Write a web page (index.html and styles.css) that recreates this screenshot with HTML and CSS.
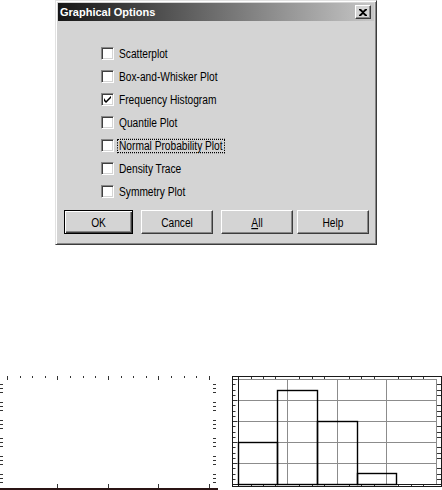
FILE: index.html
```html
<!DOCTYPE html>
<html lang="en">

<head>
  <meta charset="UTF-8">
  <title>Graphical Options</title>
  <link rel="stylesheet" href="styles.css">
</head>

<body>
  <div class="dialog">
    <div class="titlebar">
      <span class="title">Graphical Options</span>
      <span class="close">
        <svg width="8" height="7" viewBox="0 0 8 7">
          <path d="M0 0h2l2 2 2-2h2v1L5 3.5 8 6v1H6L4 5 2 7H0V6l3-2.5L0 1z" fill="#000" />
        </svg>
      </span>
    </div>

    <ul class="options">
      <li class="option"><span class="box"></span><span class="label">Scatterplot</span></li>
      <li class="option"><span class="box"></span><span class="label">Box-and-Whisker Plot</span></li>
      <li class="option">
        <span class="box">
          <svg width="7" height="7" viewBox="0 0 7 7">
            <path d="M0 2v3l2 2 5-5V-0.1L2 5z" fill="#000" />
          </svg>
        </span>
        <span class="label">Frequency Histogram</span>
      </li>
      <li class="option"><span class="box"></span><span class="label">Quantile Plot</span></li>
      <li class="option"><span class="box"></span><span class="label focus">Normal Probability Plot</span></li>
      <li class="option"><span class="box"></span><span class="label">Density Trace</span></li>
      <li class="option"><span class="box"></span><span class="label">Symmetry Plot</span></li>
    </ul>

    <div class="buttons">
      <span class="btn btn-default"><span class="caption">OK</span></span>
      <span class="btn"><span class="caption">Cancel</span></span>
      <span class="btn"><span class="caption"><u>A</u>ll</span></span>
      <span class="btn btn-help"><span class="caption">Help</span></span>
    </div>
  </div>

  <div class="charts">
    <!-- empty plot, only the axis ticks show -->
    <svg class="chart-left" width="218" height="114" viewBox="0 0 218 114">
      <path class="ticks"
        d="M7.5 0v4M57.5 0v4M108.5 0v4M158.5 0v4M209.5 0v4
           M20.5 0v2M32.5 0v2M45.5 0v2M70.5 0v2M83.5 0v2M95.5 0v2M121.5 0v2M133.5 0v2M146.5 0v2M171.5 0v2M184.5 0v2M196.5 0v2
           M0 8.5h3M0 12.5h3M0 16.5h3M0 26.5h3M0 30.5h3M0 34.5h3M0 44.5h3M0 48.5h3M0 52.5h3
           M0 62.5h3M0 66.5h3M0 70.5h3M0 80.5h3M0 84.5h3M0 88.5h3M0 98.5h3M0 102.5h3M0 106.5h3
           M213 8.5h3M213 12.5h3M213 16.5h3M213 26.5h3M213 30.5h3M213 34.5h3M213 44.5h3M213 48.5h3M213 52.5h3
           M213 62.5h3M213 66.5h3M213 70.5h3M213 80.5h3M213 84.5h3M213 88.5h3M213 98.5h3M213 102.5h3M213 106.5h3
           M57.5 108v4M108.5 108v4M158.5 108v4M209.5 108v4" />
      <path class="axis" d="M0 113H218" />
    </svg>

    <!-- frequency histogram -->
    <svg class="chart-right" width="210" height="114" viewBox="0 0 210 114">
      <path class="grid" d="M6 3.5H204M6 24.5H204M6 45.5H204M6 66.5H204M6 87.5H204
           M55.5 3V108M105.5 3V108M154.5 3V108M204.5 3V108" />
      <path class="ticks"
        d="M0.5 3.5h5M0.5 8.5h3M0.5 14.5h3M0.5 19.5h3M0.5 24.5h5M0.5 29.5h3M0.5 35.5h3M0.5 40.5h3
           M0.5 45.5h5M0.5 50.5h3M0.5 56.5h3M0.5 61.5h3M0.5 66.5h5M0.5 71.5h3M0.5 77.5h3M0.5 82.5h3
           M0.5 87.5h5M0.5 92.5h3M0.5 98.5h3M0.5 103.5h3
           M205 8.5h4M205 14.5h4M205 19.5h4M205 29.5h4M205 35.5h4M205 40.5h4M205 50.5h4M205 56.5h4
           M205 61.5h4M205 71.5h4M205 77.5h4M205 82.5h4M205 92.5h4M205 98.5h4M205 103.5h4
           M19.5 1v2M31.5 1v2M43.5 1v2M67.5 1v2M80.5 1v2M92.5 1v2M117.5 1v2M129.5 1v2M142.5 1v2M166.5 1v2M179.5 1v2M191.5 1v2
           M19.5 109v2M31.5 109v2M43.5 109v2M67.5 109v2M80.5 109v2M92.5 109v2M117.5 109v2M129.5 109v2M142.5 109v2M166.5 109v2M179.5 109v2M191.5 109v2" />
      <rect class="frame" x="0.5" y="0.5" width="209" height="110" />
      <path class="plot-edge" d="M6.5 1V111M1 108.5H209" />
      <g class="bars">
        <rect x="6.5" y="66.5" width="39" height="42" />
        <rect x="45.5" y="14.5" width="40" height="94" />
        <rect x="85.5" y="45.5" width="40" height="63" />
        <rect x="125.5" y="97.5" width="39" height="11" />
      </g>
    </svg>
  </div>
</body>

</html>
```

FILE: styles.css
```css
body {
  margin: 0;
  height: 490px;
  overflow: hidden;
  background: #fff;
  color: #000;
  font-family: "Liberation Sans", Arial, sans-serif;
  font-size: 10.2px;
}

.dialog {
  margin-left: 55px;
  width: 322px;
  height: 245px;
  box-sizing: border-box;
  padding: 2px;
  background: #d4d4d4;
  border: 1px solid;
  border-color: #e2e2e2 #3c3c3c #3c3c3c #e2e2e2;
  box-shadow: inset 1px 1px #fff, inset -1px -1px #878787;
}

.titlebar {
  height: 18px;
  display: flex;
  align-items: center;
  justify-content: space-between;
  padding: 0 3px 0 2px;
  background: linear-gradient(to right, #161616, #c6c6c6);
  color: #fff;
}

.title {
  font-weight: bold;
  font-size: 11px;
}

.close {
  width: 16px;
  height: 14px;
  box-sizing: border-box;
  display: flex;
  align-items: center;
  justify-content: center;
  background: #d4d4d4;
  border: 1px solid;
  border-color: #fff #3c3c3c #3c3c3c #fff;
  box-shadow: inset -1px -1px #878787;
}

.options {
  list-style: none;
  margin: 0;
  padding: 21px 0 0 43px;
}

.option {
  display: flex;
  align-items: center;
  gap: 3px;
  height: 23px;
}

.box {
  width: 13px;
  height: 13px;
  box-sizing: border-box;
  display: flex;
  align-items: center;
  justify-content: center;
  background: #fff;
  border: 1px solid;
  border-color: #878787 #fff #fff #878787;
  box-shadow: inset 1px 1px #404040, inset -1px -1px #d4d4d4;
}

/* the dialog font is tall and narrow */
.label,
.caption {
  display: inline-block;
  transform: scaleY(1.22);
}

.label {
  padding: 0 1px;
  border: 1px dotted transparent;
  line-height: 10px;
}

.label.focus {
  border-color: #000;
}

.buttons {
  display: flex;
  gap: 8px;
  margin-top: 7px;
  padding-left: 6px;
}

.btn {
  width: 72px;
  height: 24px;
  box-sizing: border-box;
  display: flex;
  align-items: center;
  justify-content: center;
  background: #d4d4d4;
  border: 1px solid;
  border-color: #fff #3c3c3c #3c3c3c #fff;
  box-shadow: inset -1px -1px #878787;
}

.btn-default {
  width: 69px;
  border-color: #000;
  box-shadow: inset 1px 1px #fff, inset -1px -1px #3c3c3c, inset -2px -2px #878787;
}

.btn-help {
  margin-left: -4px;
}

.charts {
  display: flex;
  margin-top: 131px;
}

.chart-right {
  margin-left: 14px;
}

.ticks {
  fill: none;
  stroke: #333;
  stroke-width: 1;
}

.axis {
  fill: none;
  stroke: #2a1414;
  stroke-width: 2;
}

.grid {
  fill: none;
  stroke: #8c8c8c;
  stroke-width: 1;
}

.frame,
.plot-edge {
  fill: none;
  stroke: #1a1a1a;
  stroke-width: 1;
}

.bars rect {
  fill: none;
  stroke: #000;
  stroke-width: 1.4;
}
```
